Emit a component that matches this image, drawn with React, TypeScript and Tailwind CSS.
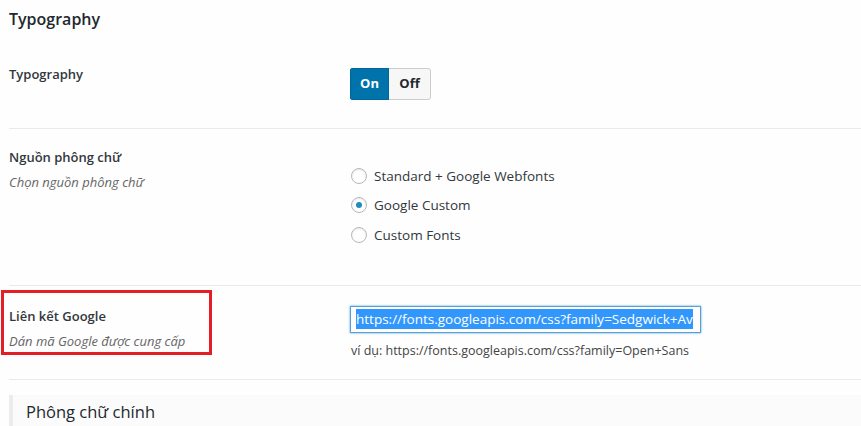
function Radio({ checked, label }: { checked?: boolean; label: string }) {
  return (
    <label className="flex items-center h-[29.5px]">
      <span className="w-[16px] h-[16px] rounded-full border border-[#b4b9be] bg-white shadow-[inset_0_1px_2px_rgba(0,0,0,0.1)] flex items-center justify-center">
        {checked && <span className="w-[6px] h-[6px] rounded-full bg-[#1e8cbe]" />}
      </span>
      <span className="ml-[7px] text-[13.5px] text-[#32373c]">{label}</span>
    </label>
  );
}

export default function App() {
  return (
    <div className="w-[861px] h-[426px] overflow-hidden bg-[#fefefe] pl-[9px] font-['Open_Sans',sans-serif] text-[#23282d]">
      <h2 className="pt-[8px] text-[16px] font-semibold leading-[22px]">Typography</h2>

      <div className="flex items-start pt-[16px] pb-[28px] mt-[18px] border-b border-[#eaeaea]">
        <div className="w-[341px] text-[13px] font-semibold leading-[20px] text-[#32373c]">Typography</div>
        <div className="mt-[4px] flex h-[32px] rounded-[3px] overflow-hidden text-[13px] font-bold">
          <span className="w-[39px] flex items-center justify-center bg-[#0073aa] text-white border border-[#006799]">On</span>
          <span className="w-[42px] flex items-center justify-center bg-[#f7f7f7] text-[#23282d] border border-l-0 border-[#cccccc] rounded-r-[3px]">Off</span>
        </div>
      </div>

      <div className="flex pt-[18px] pb-[35px] border-b border-[#eaeaea]">
        <div className="w-[341px]">
          <div className="text-[13px] font-semibold leading-[20px] text-[#32373c]">Nguồn phông chữ</div>
          <div className="mt-[5px] text-[13px] italic text-[#666] leading-[20px]">Chọn nguồn phông chữ</div>
        </div>
        <div className="pt-[14px] pl-[1px]">
          <Radio label="Standard + Google Webfonts" />
          <Radio checked label="Google Custom" />
          <Radio label="Custom Fonts" />
        </div>
      </div>

      <div className="relative flex pt-[20px] pb-[18px] border-b border-[#eaeaea]">
        <div className="w-[341px]">
          <div className="text-[13px] font-semibold leading-[20px] text-[#32373c]">Liên kết Google</div>
          <div className="mt-[5px] text-[13px] italic text-[#666] leading-[20px]">Dán mã Google được cung cấp</div>
        </div>
        <div>
          <div className="w-[351px] h-[27px] border border-[#5b9dd9] shadow-[0_0_2px_rgba(30,140,190,0.8)] bg-white flex items-center px-[5px] overflow-hidden whitespace-nowrap">
            <span className="bg-[#3297fd] text-white text-[13.5px] leading-[20px]">https://fonts.googleapis.com/css?family=Sedgwick+Av</span>
          </div>
          <div className="mt-[8px] text-[12.5px] text-[#444] leading-[20px] pl-[1px]">ví dụ: https://fonts.googleapis.com/css?family=Open+Sans</div>
        </div>
        <div className="absolute left-[-8px] top-[4px] w-[211px] h-[65px] border-[3px] border-[#e31e24] pointer-events-none" />
      </div>

      <div className="mt-[15px] h-[40px] border-l-[4px] border-[#ececec] bg-[#fbfbfb] pl-[13px] pt-[6px]">
        <h3 className="text-[16.5px] font-normal leading-[22px]">Phông chữ chính</h3>
      </div>
    </div>
  );
}
